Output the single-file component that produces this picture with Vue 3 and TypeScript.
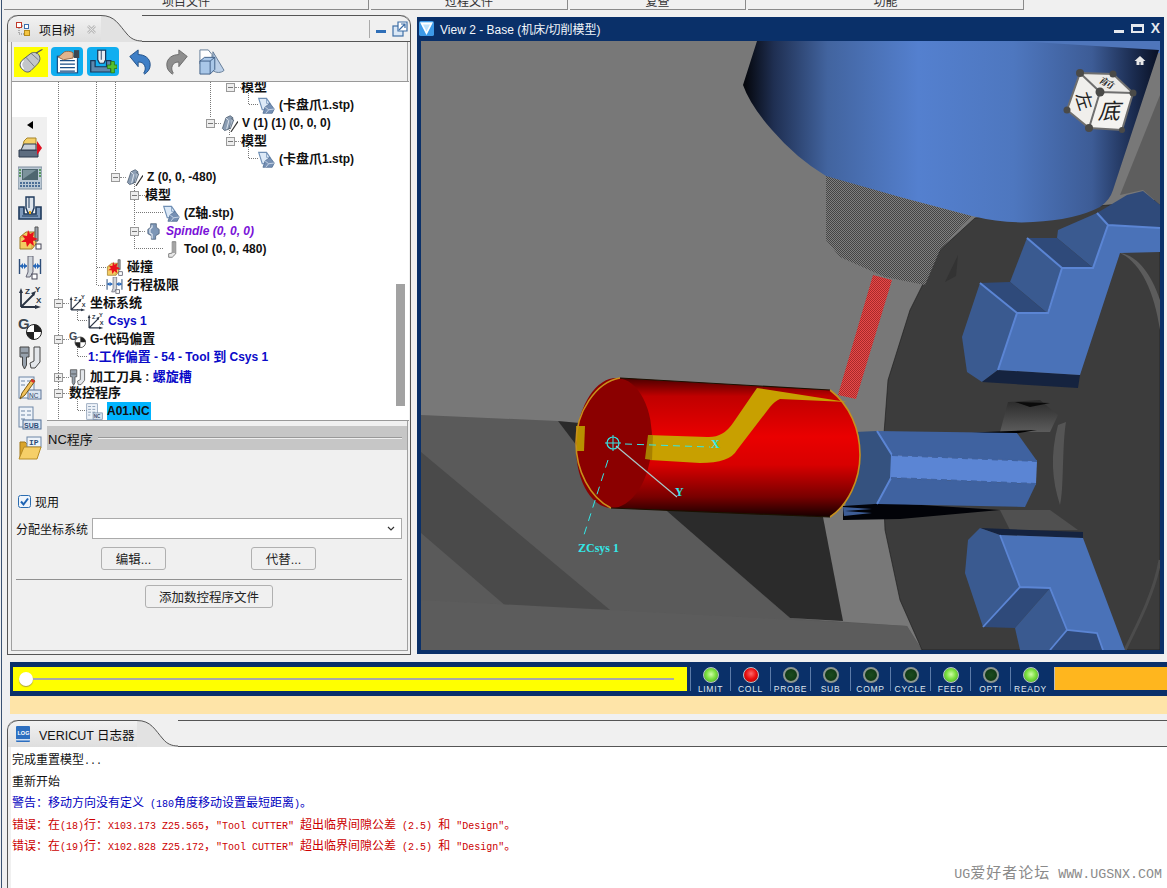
<template>
  <div class="app">
    <svg class="icon-defs" width="0" height="0" aria-hidden="true">
      <defs>
        <symbol id="i-minus" viewBox="0 0 9 9"><rect x=".5" y=".5" width="8" height="8" fill="#eee" stroke="#999" /><path d="M2 4.5h5" stroke="#777" /></symbol>
        <symbol id="i-plus" viewBox="0 0 9 9"><rect x=".5" y=".5" width="8" height="8" fill="#eee" stroke="#999" /><path d="M2 4.5h5M4.5 2v5" stroke="#777" /></symbol>
        <symbol id="i-part" viewBox="0 0 24 24"><path d="M1 2h11l5 7v9H6z" fill="#dce9f7" stroke="#6f8fb5" stroke-width="1.600" /><path d="M12 2v7h5" fill="none" stroke="#6f8fb5" /><path d="M7 23l3-9 7-5 6 8-3 6H10z" fill="#7690b4" stroke="#46648c" /><path d="M10 14l5 4 8-1M15 18l-4 5" stroke="#e4edf7" fill="none" /></symbol>
        <symbol id="i-comp" viewBox="0 0 24 24"><path d="M7 4l6-3 4 3-6 16-6 2-3-3z" fill="#8b9db3" stroke="#3f4f63" /><path d="M7 4l4 4-3 12" fill="none" stroke="#dfe6ee" stroke-width="1.400" /><path d="M14 5l4 2-5 13" fill="#aab8c8" stroke="#3f4f63" /><path d="M24 9L14 24" stroke="#333" stroke-width="1.6" /></symbol>
        <symbol id="i-spindle" viewBox="0 0 24 24"><path d="M8 1h8v5l4 3v6l-5 3v5H9v-5l-5-3V9l4-3z" fill="#7d96b6" stroke="#445870" /><path d="M10 3v3L7 9v5l3 2v6" fill="none" stroke="#e6edf5" stroke-width="1.600" /></symbol>
        <symbol id="i-tool" viewBox="0 0 24 24"><path d="M13 1h5v17l-5 5H8v-5l5-1z" fill="#e8e8e8" stroke="#555" /><path d="M15.500 1v16" stroke="#888" stroke-width="2" /></symbol>
        <symbol id="i-collision" viewBox="0 0 24 24"><path d="M2 11l6-5h10v12l-4 5H2z" fill="#f4cc62" stroke="#9b7a24" /><path d="M2 11h12v12M14 11l4-5" fill="none" stroke="#c7a03d" /><path d="M17 1h3v14h-3z" fill="#9aa2aa" stroke="#555" /><path d="M10 4l2 4 4-2-1 5 5 2-5 2 1 5-4-3-3 4-1-5-5 0 4-3-3-4 5 1z" fill="#e8101c" /><rect x="18" y="18" width="5" height="5" fill="#fff" stroke="#445" /></symbol>
        <symbol id="i-limits" viewBox="0 0 24 24"><path d="M1.500 3v15M22.500 3v15" stroke="#2d4d78" stroke-width="1.400" /><path d="M10 0h5v16l-3 5H8l2-5z" fill="#cfd4da" stroke="#667" /><path d="M2 10h7M15 10h7" stroke="#2767b8" stroke-width="1.6" /><path d="M2 10l3-3v6zM22 10l-3-3v6zM9 10l-3-3v6zM15 10l3-3v6z" fill="#2767b8" /><rect x="14" y="18" width="5" height="5" fill="#fff" stroke="#445" /></symbol>
        <symbol id="i-csys" viewBox="0 0 24 24"><path d="M3 21V6M3 21L16 8M3 21h15" stroke="#2a3444" stroke-width="1.800" fill="none" /><path d="M3 2l-2 5h4zM18 5l-5 2 3 3zM23 21l-6-2v4z" fill="#2a3444" /><text x="7" y="8" font-size="8" font-weight="700" font-family="Liberation Sans" fill="#2a3444">Z</text><text x="17" y="6" font-size="8" font-weight="700" font-family="Liberation Sans" fill="#2a3444">Y</text><text x="18" y="17" font-size="8" font-weight="700" font-family="Liberation Sans" fill="#2a3444">X</text></symbol>
        <symbol id="i-gcode" viewBox="0 0 24 24"><text x="0" y="13" font-size="15" font-weight="700" font-family="Liberation Sans" fill="#3c4650">G</text><circle cx="16" cy="16" r="7.500" fill="#fff" stroke="#222" /><path d="M16 16V8.500A7.500 7.500 0 0 1 23.500 16zM16 16v7.500A7.500 7.500 0 0 1 8.500 16z" fill="#222" /></symbol>
        <symbol id="i-tools" viewBox="0 0 24 24"><path d="M2 1h9v10H8.500v8L6.500 23 4.500 19v-8H2z" fill="#98a2ad" stroke="#444" /><path d="M3 7h7" stroke="#444" /><path d="M16 1h6v15l-5 6h-4l-1-5 4-2z" fill="#e3e6ea" stroke="#444" /></symbol>
        <symbol id="i-nc" viewBox="0 0 24 24"><rect x="1" y="1" width="15" height="22" fill="#eef3f9" stroke="#7e93ae" /><path d="M3 5h4M9 5h4M3 9h4M9 9h4M3 13h4M9 13h4M3 17h3" stroke="#7e93ae" stroke-width="1.200" /><rect x="10" y="14" width="13" height="9" fill="#dbe6f2" stroke="#6c84a3" /><text x="11" y="21.500" font-size="6.500" font-weight="700" font-family="Liberation Sans" fill="#3a4f6c">NC</text></symbol>
        <symbol id="i-ncedit" viewBox="0 0 24 24"><rect x="1" y="1" width="15" height="21" fill="#eef3f9" stroke="#6d85a5" /><path d="M3 5h4M9 5h4M3 9h4M9 9h4" stroke="#6d85a5" /><rect x="10" y="14" width="13" height="9" fill="#dbe6f2" stroke="#5c7597" /><text x="11" y="21.500" font-size="6.500" font-family="Liberation Sans" fill="#2f4564">NC</text><path d="M2 23l2-6L14 3l3 2L7 19z" fill="#f2c25a" stroke="#7a5a14" /><path d="M14 3l3 2-1.500 2-3-2z" fill="#d8322c" /></symbol>
        <symbol id="i-sub" viewBox="0 0 24 24"><rect x="1" y="1" width="14" height="20" fill="#eef3f9" stroke="#6d85a5" /><path d="M3 5h4M9 5h4M3 9h4M9 9h4M3 13h4" stroke="#6d85a5" /><rect x="5" y="14" width="18" height="9" fill="#dbe6f2" stroke="#4f6d94" /><text x="6" y="21.500" font-size="7" font-weight="700" font-family="Liberation Sans" fill="#2c4c78">SUB</text></symbol>
        <symbol id="i-ip" viewBox="0 0 24 24"><path d="M2 6h5l2 2h4v14H2z" fill="#d9a42c" stroke="#a3781a" /><rect x="9" y="1" width="14" height="10" fill="#eef3f9" stroke="#6d85a5" /><text x="11" y="9" font-size="8" font-weight="700" font-family="Liberation Mono" fill="#2c4c78">IP</text><path d="M1 23l5-12h17l-4 12z" fill="#f6cf68" stroke="#b88c24" /></symbol>
        <symbol id="i-printer" viewBox="0 0 24 24"><path d="M6 5l3-3h9v11H4z" fill="#f4d068" stroke="#a5842a" /><path d="M1 14h19v7H1z" fill="#5d6d80" stroke="#2c3a4c" /><path d="M3 14l3-6h12v6z" fill="#c9d0d8" stroke="#2c3a4c" /><path d="M19 5l5 7-5 7z" fill="#e01020" /></symbol>
        <symbol id="i-panel" viewBox="0 0 24 24"><rect x="0" y="1" width="24" height="22" fill="#bac8d4" stroke="#7c8c9c" /><rect x="4" y="3" width="16" height="11" fill="#4e6670" /><path d="M5 13l13-9H5z" fill="#7b929c" /><path d="M1 4h2M1 7h2M1 10h2M21 4h2M21 7h2M21 10h2" stroke="#38873a" stroke-width="1.600" /><path d="M2 17h20M2 20h20" stroke="#4c6e96" stroke-width="2" stroke-dasharray="2 1" /></symbol>
        <symbol id="i-machine" viewBox="0 0 24 24"><path d="M1 11h5v7h12v-7h5v12H1z" fill="#7f9abc" stroke="#1f3a5c" stroke-width="1.600" /><path d="M8 1h8v11l-2 5h-4l-2-5z" fill="#dde4ec" stroke="#1f3a5c" stroke-width="1.400" /><path d="M11 1v11M4 20h16" stroke="#1f3a5c" /><path d="M11 15h2v3h-2z" fill="#e8a91c" /></symbol>
        <symbol id="i-mouse" viewBox="0 0 34 30"><path d="M7 25c-5-4-4-9 1-13l9-7c4-2 8-1 10 3 2 5 0 8-4 12l-6 6c-3 3-7 2-10-1z" fill="#c3c6ca" stroke="#5a5f66" stroke-width="1.200" /><path d="M11 10l10 11M17 5l9 8" stroke="#6a6f76" stroke-width="1" fill="none" /><path d="M8 14c-3 3-3 7 0 10" stroke="#fff" stroke-width="1.500" fill="none" /><path d="M23 5l8-5" stroke="#555" stroke-width="1.500" /></symbol>
        <symbol id="i-handdoc" viewBox="0 0 32 28"><rect x="5" y="8" width="23" height="19" fill="#fff" stroke="#1b4f86" stroke-width="1.400" /><path d="M8 13h17M8 17h17M8 21h17M8 25h17" stroke="#1b4f86" stroke-width="1.500" /><path d="M6 9l7-6c3-1 7-1 10 1v6L12 12z" fill="#e2b48e" stroke="#8c6040" /><rect x="24" y="1" width="6" height="9" fill="#3d4650" /></symbol>
        <symbol id="i-machineadd" viewBox="0 0 32 28"><path d="M2 13h5v7h13v-7h5v13H2z" fill="#5f88ad" stroke="#17375a" stroke-width="1.400" /><path d="M10 1h9v11l-2 4h-5l-2-4z" fill="#e7ecf2" stroke="#17375a" stroke-width="1.400" /><path d="M14 1v11" stroke="#17375a" /><path d="M21 18h4v-4h4v4h3v4h-3v5h-4v-5h-4z" fill="#53c12e" stroke="#2c7a14" /></symbol>
        <symbol id="i-undo" viewBox="0 0 24 28"><path d="M1 8l9-7v5c7 0 13 4 13 11 0 5-3 8-6 10l-1-1c2-3 2-6 1-8-1-3-4-4-7-4v5z" fill="#3f7fc6" stroke="#1f4f86" /></symbol>
        <symbol id="i-redo" viewBox="0 0 24 28"><path d="M23 8l-9-7v5C7 6 1 10 1 17c0 5 3 8 6 10l1-1c-2-3-2-6-1-8 1-3 4-4 7-4v5z" fill="#8e8e8e" stroke="#6a6a6a" /></symbol>
        <symbol id="i-shapes" viewBox="0 0 28 28"><path d="M15 3l12 20c-3 3-9 3-12 0z" fill="#bcd0e8" stroke="#5f7894" /><path d="M1 1h9l4 5v10H1z" fill="#fff" stroke="#5f7894" /><path d="M1 13l5-4h11v13l-5 5H1z" fill="#a9c7e8" stroke="#3c5c84" /><path d="M1 13h11v14M12 13l5-4" fill="none" stroke="#3c5c84" /></symbol>
      </defs>
    </svg>

    <nav class="top-tabs">
      <div v-for="tab in topTabs" :key="tab.label" class="top-tab" :class="tab.cls">
        <span>{{ tab.label }}</span>
      </div>
    </nav>

    <div class="main-row">
      <section class="panel">
        <header class="tab-strip">
          <div class="tab-label">
            <svg class="tab-icon" viewBox="0 0 14 14">
              <rect x=".5" y=".5" width="5" height="5" fill="#fff" stroke="#c0392b" />
              <rect x="8.500" y="2.500" width="4" height="4" fill="#fff" stroke="#3c6fb0" />
              <rect x="8.500" y="8.500" width="5" height="5" fill="#f4c542" stroke="#b58a1a" />
              <path d="M3 6v6h5M6 4h2" stroke="#777" stroke-dasharray="1 1" fill="none" />
            </svg>
            <span class="tab-title">项目树</span>
            <svg class="tab-close" viewBox="0 0 11 11"><path d="M2 2l7 7M9 2l-7 7" stroke="#bcbcbc" stroke-width="2.800" /><path d="M2 2l7 7M9 2l-7 7" stroke="#eee" stroke-width=".8" /></svg>
          </div>
          <svg class="tab-curve" viewBox="0 0 41 27" preserveAspectRatio="none">
            <path d="M0 0C14 0 18 10 26 19 30 24 35 26 41 26V27H0Z" fill="#e2e2e2" />
            <path d="M0 .5C14 .5 18 10 26 19 30 24 35 26 41 26" fill="none" stroke="#555" />
          </svg>
          <div class="tab-rest">
            <span class="tab-sep"></span>
            <span class="win-min"></span>
            <svg class="win-pop" viewBox="0 0 16 16"><rect x="1" y="5" width="10" height="10" fill="#dbe8f6" stroke="#3e6ea6" stroke-width="1.200" /><path d="M6 1h9v9H6z" fill="#fff" stroke="#3e6ea6" stroke-width="1.200" /><path d="M7 9l6-6M9 3h4v4" fill="none" stroke="#3e6ea6" stroke-width="1.200" /></svg>
          </div>
        </header>

        <div class="panel-body">
          <div class="toolbar">
            <span class="tool-btn is-yellow"><svg class="tool-svg" viewBox="0 0 34 30"><use href="#i-mouse" /></svg></span>
            <span class="tool-btn is-blue"><svg class="tool-svg" viewBox="0 0 32 28"><use href="#i-handdoc" /></svg></span>
            <span class="tool-btn is-blue"><svg class="tool-svg" viewBox="0 0 32 28"><use href="#i-machineadd" /></svg></span>
            <svg class="tool-plain undo" viewBox="0 0 24 28"><use href="#i-undo" /></svg>
            <svg class="tool-plain redo" viewBox="0 0 24 28"><use href="#i-redo" /></svg>
            <svg class="tool-plain shapes" viewBox="0 0 28 28"><use href="#i-shapes" /></svg>
          </div>

          <div class="tree">
            <svg class="tree-guides" viewBox="12 82 396 339">
              <path v-for="g in guides" :key="g" :d="g" stroke="#777" stroke-dasharray="1 1" fill="none" shape-rendering="crispEdges" />
            </svg>
            <div class="tree-rows">
              <div v-for="row in rows" :key="row.y" class="tree-row" :style="{ paddingLeft: `${row.x - 12}px` }">
                <template v-if="row.toggle">
                  <svg class="toggle" viewBox="0 0 9 9"><use :href="`#i-${row.toggle}`" /></svg>
                  <span class="toggle-stub"></span>
                </template>
                <svg v-if="row.icon" class="tree-icon" viewBox="0 0 24 24"><use :href="`#i-${row.icon}`" /></svg>
                <span class="tree-label" :class="row.kind"><span v-for="(part, j) in splitLatin(row.label)" :key="j" :class="{ 'tree-ascii': part.latin }">{{ part.text }}</span><span v-if="row.suffix" class="blue">{{ row.suffix }}</span></span>
              </div>
            </div>
            <div class="tree-thumb"></div>
          </div>

          <div class="nc-head">
            <span>NC程序</span>
            <span class="nc-rule"></span>
          </div>

          <div class="form">
            <label class="check-row">
              <svg class="check" viewBox="0 0 13 13"><rect x=".5" y=".5" width="12" height="12" rx="2" fill="#eef4fb" stroke="#2b6cb0" /><path d="M3 6.500l2.500 3L10 3.500" fill="none" stroke="#1d63b3" stroke-width="2" /></svg>
              现用
            </label>
            <div class="combo-row">
              <span>分配坐标系统</span>
              <div class="combo">
                <svg class="chev" viewBox="0 0 8 5"><path d="M1 1l3 3 3-3" fill="none" stroke="#333" stroke-width="1.200" /></svg>
              </div>
            </div>
            <div class="btn-row">
              <button class="btn small" type="button">编辑...</button>
              <button class="btn small" type="button">代替...</button>
            </div>
            <div class="form-rule"></div>
            <div class="add-row">
              <button class="btn wide" type="button">添加数控程序文件</button>
            </div>
          </div>
        </div>

        <aside class="side-tools">
          <svg class="side-arrow" viewBox="0 0 6 8"><path d="M6 0v8L0 4z" fill="#000" /></svg>
          <svg v-for="name in sideTools" :key="name" class="side-icon" viewBox="0 0 24 24"><use :href="`#i-${name}`" /></svg>
        </aside>
      </section>

      <section class="view">
        <header class="view-title">
          <svg class="view-logo" viewBox="0 0 16 16">
            <rect width="16" height="16" rx="2" fill="#3d9ae8" />
            <path d="M1 1l14 0-7 14z" fill="#bfe2fb" />
            <path d="M3 3h10L8 13z" fill="none" stroke="#fff" stroke-width="1.600" />
          </svg>
          <span class="view-name">View 2 - Base (机床/切削模型)</span>
          <span class="view-ctrl">
            <span class="ctrl-min"></span>
            <span class="ctrl-max"></span>
            <span class="ctrl-x">X</span>
          </span>
        </header>
        <svg class="scene" viewBox="421 41 739 609">
          <defs>
            <linearGradient id="cyl" x1="745" x2="1158" y1="0" y2="0" gradientUnits="userSpaceOnUse">
              <stop offset="0" stop-color="#05070d" />
              <stop offset=".07" stop-color="#1f2f52" />
              <stop offset=".2" stop-color="#42649f" />
              <stop offset=".42" stop-color="#5480cf" />
              <stop offset=".65" stop-color="#4e77bf" />
              <stop offset=".84" stop-color="#3d5c96" />
              <stop offset=".94" stop-color="#1b2c50" />
              <stop offset="1" stop-color="#0a1226" />
            </linearGradient>
            <linearGradient id="redbody" x1="0" x2="0" y1="378" y2="518" gradientUnits="userSpaceOnUse">
              <stop offset="0" stop-color="#4a0000" />
              <stop offset=".13" stop-color="#c00000" />
              <stop offset=".42" stop-color="#ea0000" />
              <stop offset=".62" stop-color="#d80000" />
              <stop offset=".85" stop-color="#780000" />
              <stop offset="1" stop-color="#100000" />
            </linearGradient>
            <linearGradient id="chuckShade" x1="0" x2="0" y1="0" y2="1">
              <stop offset="0" stop-color="#2a2a2a" />
              <stop offset="1" stop-color="#5c5c5c" />
            </linearGradient>
            <pattern id="hatch" width="2" height="2" patternUnits="userSpaceOnUse">
              <rect width="2" height="2" fill="#808080" />
              <rect width="1" height="1" fill="#444" />
              <rect x="1" y="1" width="1" height="1" fill="#444" />
            </pattern>
            <pattern id="hatchRed" width="2" height="2" patternUnits="userSpaceOnUse">
              <rect width="2" height="2" fill="#e84a4a" />
              <rect width="1" height="1" fill="#a82a2a" />
              <rect x="1" y="1" width="1" height="1" fill="#a82a2a" />
            </pattern>
          </defs>

          <rect x="421" y="41" width="739" height="609" fill="#787878" />

          <!-- floor -->
          <path d="M421 415L558 421 667 510 790 618 833 621 907 626 922 650H421Z" fill="#5a5a5a" />
          <path d="M421 452L610 610 507 607 421 533Z" fill="#4a4a4a" />
          <path d="M421 600L610 610 907 626 922 650H421Z" fill="#5c5c5c" />
          <path d="M558 421L580 423 580 450Z" fill="#2a2a2a" />
          <path d="M660 505L823 517 843 621 790 618Z" fill="#2b2b2b" />

          <!-- chuck disc -->
          <path d="M975 218L940 250 910 310 888 380 882 460 885 530 900 600 922 650H1160V200Z" fill="#3c3c3c" stroke="#1a1a1a" stroke-width=".6" />
          <path d="M1125 650C1140 620 1155 590 1160 560" fill="none" stroke="#4c4c4c" stroke-width="3" />
          <path d="M1120 253C1140 262 1154 290 1160 330L1160 300C1150 270 1135 255 1120 253Z" fill="#5c5c5c" />
          <path d="M1058 425C1050 455 1052 480 1060 505 1064 490 1062 445 1066 422Z" fill="#555" />
          <path d="M1000 432L1008 402 1040 400 1058 415 1050 432Z" fill="url(#chuckShade)" />
          <path d="M1000 510L1050 510 1078 530 1010 530Z" fill="#505050" />
          <path d="M1015 402L1050 403 1030 407Z" fill="#0a0a0a" />
          <path d="M945 435L985 432 1037 430 990 438Z" fill="#000" />
          <path d="M945 282L958 255 956 276Z" fill="#333" />

          <!-- hatched collar and red tool -->
          <path d="M826 170L900 197 972 216 962 225 940 250 925 285 885 277 840 257 826 240Z" fill="url(#hatch)" />
          <path d="M873 275L892 280 856 399 838 395Z" fill="url(#hatchRed)" />

          <!-- big blue cylinder -->
          <rect x="1017" y="41" width="143" height="12" fill="#4f76bb" />
          <path d="M1120 195L1160 95V205L1143 190Z" fill="#5e5e5e" />
          <path d="M757 41L743 85Q750 105 772 130 796 158 826 176L900 197 972 216Q1005 224 1033 222 1075 220 1100 207 1110 200 1113 190L1159 50 1017 41Z" fill="url(#cyl)" />

          <!-- top jaw -->
          <path d="M1097 213L1127 195 1143 191 1160 205V228L1108 225Z" fill="#2f4a7a" />
          <path d="M1057 238L1058 230 1097 213 1108 225 1093 268Z" fill="#3a5a90" />
          <path d="M1027 238L1057 238 1093 268 1062 268Z" fill="#2f4a7a" />
          <path d="M1027 238L1062 268 1047 313 1010 282Z" fill="#3a5a90" />
          <path d="M980 283L1010 282 1047 313 1017 313Z" fill="#2f4a7a" />
          <path d="M980 283L1017 313 998 370 982 382 967 372 962 337Z" fill="#3a5a90" />
          <path d="M982 382L998 370 1080 375 1078 388Z" fill="#15233f" />
          <path d="M1108 225L1160 228V252L1120 253 1080 375 998 370 1017 313 1048 313 1062 268 1093 268Z" fill="#4a72b8" />
          <path d="M1097 213L1108 225 1160 228M1108 225L1093 268 1062 268 1048 313 1017 313 998 370M1027 238L1062 268M980 283L1017 313" fill="none" stroke="#5b85d4" stroke-width="2" />

          <!-- bottom jaw -->
          <path d="M980 528L1000 535 1083 538 1083 532Z" fill="#15233f" />
          <path d="M980 528L1000 535 1020 587 983 627 965 573 968 540Z" fill="#3a5a90" />
          <path d="M1020 587L1050 588 1015 628 983 627Z" fill="#2f4a7a" />
          <path d="M1050 588L1067 630 1050 650H1020L1015 628Z" fill="#3a5a90" />
          <path d="M1067 630L1097 633 1103 650H1050Z" fill="#2f4a7a" />
          <path d="M1000 535L1083 538 1125 650H1103L1097 633 1067 630 1050 588 1020 587Z" fill="#4a72b8" />
          <path d="M1000 535L1020 587 1050 588 1067 630 1097 633 1103 650M1020 587L983 627M1067 630L1050 650" fill="none" stroke="#5b85d4" stroke-width="1.800" />

          <!-- hex shank -->
          <path d="M855 432L877 431 892 455 891 478 877 504 845 508 850 470Z" fill="#35527f" />
          <path d="M843 506L890 503 1000 510 900 519 843 520Z" fill="#020308" />
          <path d="M843 507L872 509 845 511 872 513 844 516Z" fill="#3d5d96" />
          <path d="M877 431L1017 433 1037 461 892 455Z" fill="#3f62a0" />
          <path d="M892 455L1037 461 1036 484 891 478Z" fill="#5b85d4" />
          <path d="M891 478L1036 484 1025 507 877 504Z" fill="#3f62a0" />
          <path d="M877 431L892 455 891 478 877 504" fill="none" stroke="#5b85d4" stroke-width="2" />
          <path d="M892 455L1037 461M891 478L1036 484" stroke="#3f62a0" stroke-width="2" stroke-dasharray="6 4" />

          <!-- red workpiece -->
          <path d="M620 378L830 390C850 405 860 430 860 455 860 480 848 505 830 517L611 508Z" fill="url(#redbody)" />
          <path d="M647 435L707 437Q723 438 733 423L757 388 847 402 780 399Q775 401 770 407L737 450Q730 463 700 463L650 460Z" fill="#c8a000" />
          <ellipse cx="614" cy="443" rx="38" ry="65" transform="rotate(3 614 443)" fill="#8b0000" />
          <path d="M576 426H585L584 451 577 451Z" fill="#b89000" />
          <path d="M648 435H653L652 460 645 459Z" fill="#a88000" />
          <path d="M611 508C590 498 576 470 576 443 576 412 596 382 620 378M830 390C850 405 860 430 860 455 860 480 848 505 830 517" fill="none" stroke="#c8901c" stroke-width="1.600" />
          <path d="M620 378L830 390M611 508L830 517" fill="none" stroke="#1c1000" stroke-width="1.200" />

          <!-- csys -->
          <circle cx="613" cy="443" r="6" fill="none" stroke="#33e8e8" stroke-width="1.200" />
          <path d="M613 435V451M605 443H621" stroke="#33e8e8" />
          <path d="M625 444L710 447" stroke="#33e8e8" stroke-dasharray="7 5" />
          <path d="M608 460L583 538" stroke="#33e8e8" stroke-dasharray="8 6" />
          <path d="M616 446L677 497" stroke="#a8c8c8" stroke-width="1.200" />
          <text class="scene-label" x="711" y="448">X</text>
          <text class="scene-label" x="675" y="496">Y</text>
          <text class="scene-label" x="578" y="552">ZCsys 1</text>

          <!-- home and view cube -->
          <path d="M1140 56l-5.500 5h2v4h3v-3h1v3h3v-4h2z" fill="#e8e8e8" />
          <path d="M1080 73L1113 74 1133 93 1100 92Z" fill="#ecebe8" />
          <path d="M1080 73L1100 92 1089 128 1067 110Z" fill="#f0efec" />
          <path d="M1100 92L1133 93 1122 130 1089 128Z" fill="#f4f3f0" />
          <text class="cube-text" transform="matrix(.8 .45 -.35 .42 1107 83)" font-size="17" text-anchor="middle" dy=".35em">前</text>
          <text class="cube-text" transform="translate(1084 101) rotate(72)" font-size="18" text-anchor="middle" dy=".35em">左</text>
          <text class="cube-text" transform="matrix(1 0 -.28 1 1111 111)" font-size="22" text-anchor="middle" dy=".35em">底</text>
          <path d="M1080 73L1113 74 1133 93 1122 130 1089 128 1067 110ZM1080 73L1100 92 1133 93M1100 92L1089 128" fill="none" stroke="#6f6f6f" stroke-width="2" />
          <g fill="#4a4a48">
            <circle cx="1080" cy="73" r="4" /><circle cx="1113" cy="74" r="3.500" /><circle cx="1133" cy="93" r="3.500" /><circle cx="1100" cy="92" r="4.500" />
            <circle cx="1067" cy="110" r="3.500" /><circle cx="1089" cy="128" r="4" /><circle cx="1122" cy="130" r="3" />
          </g>
        </svg>
      </section>
    </div>

    <div class="status">
      <div class="slider">
        <span class="slider-knob"></span>
        <span class="slider-line"></span>
      </div>
      <div v-for="led in leds" :key="led.label" class="led-cell">
        <span class="led" :class="led.state"></span>
        <span class="led-label">{{ led.label }}</span>
      </div>
      <div class="progress"></div>
    </div>
    <div class="pale-bar"></div>

    <section class="log">
      <header class="tab-strip log-strip">
        <div class="tab-label log-tab">
          <svg class="tab-icon log-icon" viewBox="0 0 14 16">
            <rect width="14" height="16" rx="1" fill="#2d6fc0" />
            <rect x="0" y="13" width="14" height="1.500" fill="#cfe0f4" />
            <text x="1.500" y="9" font-size="5.500" font-weight="700" font-family="Liberation Sans" fill="#fff">LOG</text>
          </svg>
          <span class="log-title">VERICUT 日志器</span>
        </div>
        <svg class="tab-curve" viewBox="0 0 41 27" preserveAspectRatio="none">
          <path d="M0 0C14 0 18 10 26 19 30 24 35 26 41 26V27H0Z" fill="#e2e2e2" />
          <path d="M0 .5C14 .5 18 10 26 19 30 24 35 26 41 26" fill="none" stroke="#555" />
        </svg>
        <div class="tab-rest"></div>
      </header>
      <div class="log-body">
        <p v-for="(line, i) in logLines" :key="i" class="log-line" :class="line.kind">
          <span v-for="(part, j) in splitLatin(line.text)" :key="j" :class="{ latin: part.latin }">{{ part.text }}</span>
        </p>
        <p class="watermark">
          <span v-for="(part, j) in splitLatin('UG爱好者论坛 WWW.UGSNX.COM')" :key="j" :class="{ latin: part.latin }">{{ part.text }}</span>
        </p>
      </div>
    </section>
  </div>
</template>

<script setup lang="ts">
interface TreeRow {
  y: number;
  x: number;
  toggle?: 'minus' | 'plus';
  icon?: string;
  label: string;
  suffix?: string;
  kind?: string;
}

const topTabs = [
  { label: '项目文件', cls: 'tab-a' },
  { label: '过程文件', cls: 'tab-b' },
  { label: '复查', cls: 'tab-c' },
  { label: '功能', cls: 'tab-d' },
];

const rows: TreeRow[] = [
  { y: 87, x: 226, toggle: 'minus', label: '模型' },
  { y: 105, x: 258, icon: 'part', label: '(卡盘爪1.stp)' },
  { y: 123, x: 206, toggle: 'minus', icon: 'comp', label: 'V (1) (1) (0, 0, 0)' },
  { y: 141, x: 226, toggle: 'minus', label: '模型' },
  { y: 159, x: 258, icon: 'part', label: '(卡盘爪1.stp)' },
  { y: 177, x: 111, toggle: 'minus', icon: 'comp', label: 'Z (0, 0, -480)' },
  { y: 195, x: 130, toggle: 'minus', label: '模型' },
  { y: 213, x: 163, icon: 'part', label: '(Z轴.stp)' },
  { y: 231, x: 130, toggle: 'minus', icon: 'spindle', label: 'Spindle (0, 0, 0)', kind: 'spindle' },
  { y: 249, x: 163, icon: 'tool', label: 'Tool (0, 0, 480)' },
  { y: 267, x: 106, icon: 'collision', label: '碰撞' },
  { y: 285, x: 106, icon: 'limits', label: '行程极限' },
  { y: 303, x: 54, toggle: 'minus', icon: 'csys', label: '坐标系统' },
  { y: 321, x: 87, icon: 'csys', label: 'Csys 1', kind: 'blue' },
  { y: 339, x: 54, toggle: 'minus', icon: 'gcode', label: 'G-代码偏置' },
  { y: 357, x: 88, label: '1:工作偏置 - 54 - Tool 到 Csys 1', kind: 'blue' },
  { y: 376, x: 54, toggle: 'plus', icon: 'tools', label: '加工刀具 : ', suffix: '螺旋槽' },
  { y: 393, x: 54, toggle: 'minus', label: '数控程序' },
  { y: 411, x: 86, icon: 'nc', label: 'A01.NC', kind: 'selected' },
];

const guides = [
  'M58.5 82V421',
  'M96.5 82V285H106M96.5 267H106',
  'M115.5 82V172',
  'M134.5 182V226M134.5 200V212.500H163M134.5 236V248.500H163',
  'M210.500 82V118',
  'M229.500 128V136',
  'M248.500 93V104.500H258M248.500 147V158.500H258',
  'M77.500 309V320.500H87M77.500 345V356.500H87M77.500 399V410.500H87',
];

const sideTools = ['printer', 'panel', 'machine', 'collision', 'limits', 'csys', 'gcode', 'tools', 'ncedit', 'sub', 'ip'];

const leds = [
  { label: 'LIMIT', state: 'on' },
  { label: 'COLL', state: 'alert' },
  { label: 'PROBE', state: 'off' },
  { label: 'SUB', state: 'off' },
  { label: 'COMP', state: 'off' },
  { label: 'CYCLE', state: 'off' },
  { label: 'FEED', state: 'on' },
  { label: 'OPTI', state: 'off' },
  { label: 'READY', state: 'on' },
];

const logLines = [
  { kind: '', text: '完成重置模型...' },
  { kind: '', text: '重新开始' },
  { kind: 'warn', text: '警告：移动方向没有定义 (180角度移动设置最短距离)。' },
  { kind: 'err', text: '错误：在(18)行：X103.173 Z25.565，"Tool CUTTER" 超出临界间隙公差 (2.5) 和 "Design"。' },
  { kind: 'err', text: '错误：在(19)行：X102.828 Z25.172，"Tool CUTTER" 超出临界间隙公差 (2.5) 和 "Design"。' },
];

// ascii runs get a smaller face than the CJK around them
const splitLatin = (text: string) =>
  text
    .split(/([\x20-\x7e]+)/)
    .filter(Boolean)
    .map(part => ({ text: part, latin: /^[\x20-\x7e]+$/.test(part) }));
</script>

<style>
html,
body {
  margin: 0;
  background: #f0f0f0;
}
</style>

<style scoped>
.app {
  position: relative;
  width: 1167px;
  height: 888px;
  overflow: hidden;
  background: linear-gradient(90deg, #f0f0f0 1px, #3a5272 1px, #3a5272 2px, #f0f0f0 2px);
  font-family: "Liberation Sans", "Noto Sans CJK SC", sans-serif;
  font-size: 12px;
  color: #111;
}

.icon-defs {
  position: absolute;
}

.top-tabs {
  display: flex;
  gap: 2px;
  height: 10px;
  padding-left: 4px;
  box-sizing: border-box;
}

.top-tab {
  display: flex;
  justify-content: center;
  box-sizing: border-box;
  height: 10px;
  overflow: hidden;
  border-right: 1px solid #8a8a8a;
  border-bottom: 1px solid #8a8a8a;
  color: #333;
}

.top-tab span {
  margin-top: -6px;
  line-height: 16px;
}

.tab-a { width: 365px; }
.tab-b { width: 197px; }
.tab-c { width: 176px; }
.tab-d { width: 276px; }

.main-row {
  display: flex;
  gap: 6px;
  height: 640px;
  margin-top: 5px;
  padding-left: 7px;
}

.panel {
  position: relative;
  display: flex;
  flex-direction: column;
  box-sizing: border-box;
  width: 404px;
  height: 640px;
  border: 1px solid #555;
  border-top: 0;
  border-radius: 10px 10px 0 0;
}

.tab-strip {
  display: flex;
  flex: none;
  height: 27px;
}

.tab-label {
  display: flex;
  align-items: center;
  box-sizing: border-box;
  width: 93px;
  height: 27px;
  padding-left: 8px;
  border-top: 1px solid #555;
  border-radius: 10px 0 0;
  background: linear-gradient(#f2f2f2, #dedede);
}

.tab-icon {
  width: 14px;
  height: 14px;
  flex: none;
}

.tab-title {
  margin-left: 9px;
  font-size: 12px;
}

.tab-close {
  width: 11px;
  height: 11px;
  margin-left: 11px;
}

.tab-curve {
  flex: none;
  width: 41px;
  height: 27px;
}

.tab-rest {
  display: flex;
  flex: 1;
  align-items: center;
  box-sizing: border-box;
  height: 27px;
  border-top: 1px solid #555;
  border-bottom: 1px solid #555;
  border-top-right-radius: 10px;
  background: #f0f0f0;
}

.tab-sep {
  width: 1px;
  height: 18px;
  margin-left: 227px;
  background: #aaa;
}

.win-min {
  width: 10px;
  height: 3px;
  margin-left: 6px;
  margin-top: 6px;
  background: #2f6fb8;
}

.win-pop {
  width: 16px;
  height: 16px;
  margin-left: 6px;
}

.panel-body {
  display: flex;
  flex: 1;
  flex-direction: column;
  box-sizing: border-box;
  margin: 0 2px 3px 3px;
  border: 1px solid #a0a0a0;
  border-top: 0;
  background: #f0f0f0;
}

.toolbar {
  display: flex;
  align-items: center;
  height: 39px;
  padding-left: 2px;
  box-sizing: border-box;
}

.tool-btn {
  display: flex;
  align-items: center;
  justify-content: center;
  width: 32px;
  height: 29px;
  margin-right: 4px;
  border-radius: 4px;
}

.tool-btn.is-yellow {
  width: 34px;
  height: 30px;
  margin-right: 3px;
  border-radius: 0;
  background: #ffff00;
}

.tool-btn.is-blue {
  background: #10aef0;
}

.tool-svg {
  width: 28px;
  height: 25px;
}

.tool-plain {
  height: 26px;
  width: 24px;
}

.undo { margin-left: 5px; }
.redo { margin-left: 13px; }
.shapes { margin-left: 9px; width: 28px; }

.tree {
  position: relative;
  box-sizing: border-box;
  width: 397px;
  height: 340px;
  overflow: hidden;
  background: #fff;
  border-top: 1px solid #999;
  border-bottom: 1px solid #999;
}

.tree-guides {
  position: absolute;
  left: 0;
  top: 0;
  width: 396px;
  height: 339px;
}

.tree-rows {
  position: relative;
  margin-top: -4px;
}

.tree-row {
  display: flex;
  align-items: center;
  height: 18px;
}

.tree-row:nth-child(17) {
  position: relative;
  top: 2px;
}

.toggle {
  flex: none;
  width: 9px;
  height: 9px;
}

.toggle-stub {
  flex: none;
  width: 6px;
  height: 0;
  border-top: 1px dotted #888;
}

.tree-icon {
  flex: none;
  width: 17px;
  height: 17px;
  margin-right: 4px;
}

.tree-label {
  font-size: 13px;
  font-weight: 700;
  line-height: 18px;
  white-space: pre;
  color: #111;
}

.tree-ascii {
  font-size: 12px;
}

.tree-label.blue,
.tree-label .blue {
  color: #0a0ac8;
}

.tree-label.spindle {
  color: #7a12d8;
  font-style: italic;
}

.tree-label.selected {
  padding-right: 1px;
  background: #00b4ff;
}

.tree-thumb {
  position: absolute;
  left: 384px;
  top: 202px;
  width: 9px;
  height: 122px;
  background: #a2a2a2;
}

.nc-head {
  display: flex;
  align-items: center;
  height: 24px;
  margin-top: 5px;
  padding-left: 36px;
  padding-right: 5px;
  background: #c6c6c6;
  font-size: 13px;
}

.nc-rule {
  flex: 1;
  height: 1px;
  margin-left: 5px;
  background: #eee;
  box-shadow: 0 -1px 0 #999;
}

.form {
  display: flex;
  flex-direction: column;
  padding: 45px 5px 0 4px;
  font-size: 12px;
}

.check-row {
  display: flex;
  align-items: center;
  gap: 4px;
  height: 13px;
  padding-left: 2px;
}

.check {
  width: 13px;
  height: 13px;
}

.combo-row {
  display: flex;
  align-items: center;
  gap: 4px;
  margin-top: 10px;
}

.combo {
  display: flex;
  flex: 1;
  align-items: center;
  justify-content: flex-end;
  box-sizing: border-box;
  height: 21px;
  padding-right: 6px;
  background: #fff;
  border: 1px solid #aaa;
}

.chev {
  width: 8px;
  height: 5px;
}

.btn-row {
  display: flex;
  gap: 85px;
  margin-top: 8px;
  padding-left: 85px;
}

.btn {
  box-sizing: border-box;
  height: 23px;
  padding: 0;
  background: #f0f0f0;
  border: 1px solid #b0b0b0;
  border-radius: 3px;
  font: inherit;
  font-size: 12.500px;
  color: #222;
}

.btn.small {
  width: 65px;
}

.btn.wide {
  width: 128px;
}

.form-rule {
  height: 1px;
  margin-top: 9px;
  background: #909090;
}

.add-row {
  margin-top: 5px;
  padding-left: 129px;
}

.side-tools {
  position: absolute;
  left: 4px;
  top: 102px;
  display: flex;
  flex-direction: column;
  align-items: center;
  gap: 6px;
  box-sizing: border-box;
  width: 35px;
  height: 344px;
  padding-top: 4px;
  background: #f0f0f0;
}

.side-arrow {
  flex: none;
  width: 6px;
  height: 8px;
  margin-bottom: 1px;
}

.side-icon {
  flex: none;
  width: 24px;
  height: 24px;
}

.view {
  display: flex;
  flex-direction: column;
  box-sizing: border-box;
  width: 747px;
  height: 637px;
  margin-top: 2px;
  padding: 0 4px 4px;
  background: #0a3069;
}

.view-title {
  display: flex;
  flex: none;
  align-items: center;
  box-sizing: border-box;
  height: 24px;
  padding-bottom: 2px;
  color: #f2f6fb;
  font-size: 12px;
}

.view-logo {
  width: 15px;
  height: 15px;
  margin-left: -2px;
}

.view-name {
  margin-left: 6px;
}

.view-ctrl {
  display: flex;
  align-items: center;
  margin-left: auto;
}

.ctrl-min {
  width: 10px;
  height: 3px;
  margin-top: 7px;
  background: #e4e8ee;
}

.ctrl-max {
  box-sizing: border-box;
  width: 13px;
  height: 9px;
  margin-left: 7px;
  border: 2px solid #e4e8ee;
  border-top-width: 3px;
}

.ctrl-x {
  margin-left: 7px;
  font-size: 14px;
  font-weight: 700;
  color: #e4e8ee;
}

.scene {
  display: block;
  width: 739px;
  height: 609px;
}

.scene-label {
  font-family: "Liberation Serif", serif;
  font-size: 12px;
  font-weight: 700;
  fill: #33e8e8;
}

.cube-text {
  font-family: "Noto Sans CJK SC", sans-serif;
  fill: #222;
}

.status {
  display: flex;
  box-sizing: border-box;
  height: 34px;
  margin: 7px 0 0 10px;
  padding-left: 3px;
  padding-top: 5px;
  background: #0a3069;
}

.slider {
  display: flex;
  flex: none;
  align-items: center;
  box-sizing: border-box;
  width: 674px;
  height: 24px;
  padding: 0 13px 0 6px;
  background: #ffff00;
}

.slider-knob {
  flex: none;
  width: 14px;
  height: 14px;
  border-radius: 50%;
  background: #fff;
  box-shadow: 0 1px 1px #a8a040;
}

.slider-line {
  flex: 1;
  height: 2px;
  background: #a8a8a8;
}

.led-cell {
  display: flex;
  flex: none;
  flex-direction: column;
  align-items: center;
  box-sizing: border-box;
  width: 40px;
  height: 24px;
  border-left: 1px solid #5c7ba8;
}

.slider + .led-cell {
  margin-left: 3px;
}

.led {
  flex: none;
  box-sizing: border-box;
  width: 16px;
  height: 16px;
  border-radius: 50%;
  border: 1px solid #b8c0c8;
}

.led.on {
  background: radial-gradient(circle at 50% 45%, #d0fca8 0, #7ce040 45%, #3c9a24 100%);
}

.led.alert {
  background: radial-gradient(circle at 50% 40%, #ff6a6a 0, #e80c0c 50%, #a00808 100%);
}

.led.off {
  border: 2px solid #8c9690;
  background: radial-gradient(circle, #1c4c20 0, #0a3210 100%);
}

.led-label {
  margin-top: 2px;
  font-size: 8.500px;
  line-height: 9px;
  letter-spacing: .7px;
  color: #dfe6ee;
  white-space: nowrap;
}

.progress {
  flex: 1;
  height: 23px;
  margin-left: 4px;
  border-left: 1px solid #bcbcbc;
  background: #ffb61e;
}

.pale-bar {
  height: 18px;
  margin-left: 10px;
  background: #fee4a8;
}

.log {
  display: flex;
  flex-direction: column;
  height: 168px;
  margin: 6px 0 0 7px;
  border-left: 1px solid #555;
  border-radius: 10px 0 0;
}

.log-strip .tab-rest {
  border-radius: 0;
}

.log-tab {
  width: 129px;
}

.log-icon {
  height: 16px;
}

.log-title {
  margin-left: 9px;
  font-size: 12.500px;
  white-space: nowrap;
}

.log-body {
  position: relative;
  flex: 1;
  margin-left: 3px;
  padding-top: 1px;
  background: #fff;
}

.log-line {
  height: 21.600px;
  margin: 0;
  padding-left: 1px;
  font-family: "Noto Sans CJK SC", sans-serif;
  font-size: 12px;
  line-height: 21.600px;
  white-space: pre;
  color: #111;
}

.log-line.warn {
  color: #0000c0;
}

.log-line.err {
  color: #cc0000;
}

.latin {
  font-family: "Liberation Mono", monospace;
  font-size: 10px;
}

.watermark {
  position: absolute;
  right: 5px;
  bottom: 4px;
  margin: 0;
  font-family: "Noto Sans CJK SC", sans-serif;
  font-size: 15px;
  letter-spacing: 1px;
  line-height: 18px;
  white-space: pre;
  color: #8a8a8a;
}

.watermark .latin {
  font-size: 13.300px;
  letter-spacing: 0;
}
</style>
